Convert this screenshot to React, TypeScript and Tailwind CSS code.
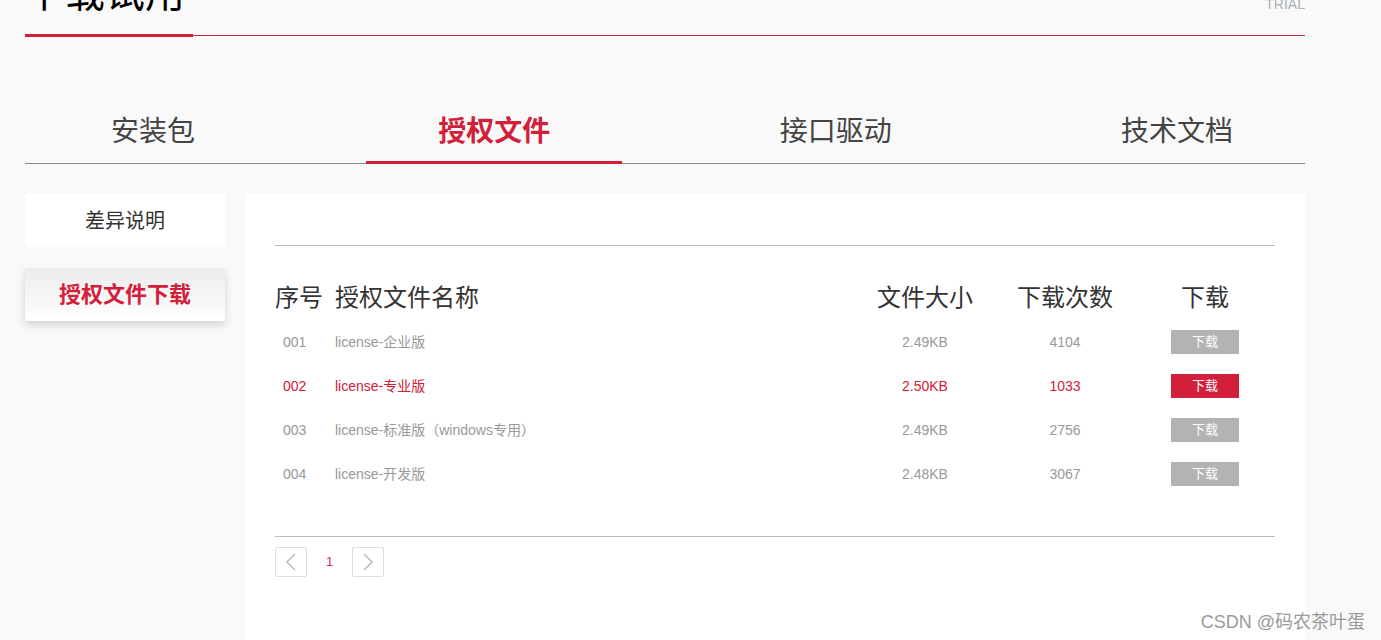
import React from "react"

const TABS = ["安装包", "授权文件", "接口驱动", "技术文档"]

const ROWS = [
  { no: "001", name: "license-企业版", size: "2.49KB", count: "4104" },
  { no: "002", name: "license-专业版", size: "2.50KB", count: "1033", active: true },
  { no: "003", name: "license-标准版（windows专用）", size: "2.49KB", count: "2756" },
  { no: "004", name: "license-开发版", size: "2.48KB", count: "3067" },
]

function Chevron({ dir }: { dir: "left" | "right" }) {
  return (
    <svg width="12" height="20" viewBox="0 0 12 20" fill="none">
      <polyline
        points={dir === "left" ? "10,2 2,10 10,18" : "2,2 10,10 2,18"}
        stroke="#bdbdbd"
        strokeWidth="1.6"
      />
    </svg>
  )
}

export default function App() {
  return (
    <div className="relative min-h-screen overflow-hidden bg-[#f9f9f9] font-['Liberation_Sans','Noto_Sans_CJK_SC',sans-serif]">
      <div className="ml-[25px] w-[1280px]">
        {/* Page header */}
        <div className="flex h-[36px] items-start justify-between border-b border-[#c8283c]">
          <div className="h-[37px] w-[168px] border-b-[3px] border-[#d2203a]">
            <h1 className="-mt-[27px] text-[40px] leading-[40px] text-black">下载试用</h1>
          </div>
          <span className="-mt-[4px] text-[14px] leading-[16px] text-[#aab0b8]">TRIAL</span>
        </div>

        {/* Tabs */}
        <ul className="mt-[63px] flex h-[65px] items-start justify-between border-b border-[#8a8a8a]">
          {TABS.map((t, i) => (
            <li
              key={t}
              className={
                i === 1
                  ? "h-[65px] w-[256px] border-b-[3px] border-[#d2203a] text-center text-[28px] leading-[66px] font-bold text-[#d2203a]"
                  : "h-[64px] w-[256px] text-center text-[28px] leading-[66px] text-[#444]"
              }
            >
              {t}
            </li>
          ))}
        </ul>

        {/* Body */}
        <div className="mt-[30px] flex gap-[20px]">
          <div className="w-[200px] shrink-0">
            <div className="flex h-[53px] items-center justify-center bg-white text-[20px] text-[#333]">
              差异说明
            </div>
            <div className="mt-[21px] flex h-[53px] items-center justify-center bg-gradient-to-b from-[#ececec] to-white text-[22px] font-bold text-[#d2203a] shadow-[0_4px_8px_rgba(0,0,0,0.16)]">
              授权文件下载
            </div>
          </div>

          <div className="h-[460px] flex-1 bg-white px-[30px] pt-[51px]">
            <div className="border-t border-[#bbbbbb]" />

            {/* Table header */}
            <div className="mt-[30px] grid h-[44px] grid-cols-[60px_1fr_140px_140px_140px] items-center text-[24px] text-[#333]">
              <span>序号</span>
              <span>授权文件名称</span>
              <span className="text-center">文件大小</span>
              <span className="text-center">下载次数</span>
              <span className="text-center">下载</span>
            </div>

            {ROWS.map((r) => (
              <div
                key={r.no}
                className={`grid h-[44px] grid-cols-[60px_1fr_140px_140px_140px] items-center text-[14px] ${
                  r.active ? "text-[#d2203a]" : "text-[#999]"
                }`}
              >
                <span className="pl-[8px]">{r.no}</span>
                <span>{r.name}</span>
                <span className="text-center">{r.size}</span>
                <span className="text-center">{r.count}</span>
                <span className="flex justify-center">
                  <button
                    className={`h-[24px] w-[68px] text-[13px] text-white ${
                      r.active ? "bg-[#d2203a]" : "bg-[#b3b3b3]"
                    }`}
                  >
                    下载
                  </button>
                </span>
              </div>
            ))}

            <div className="mt-[40px] border-t border-[#bbbbbb]" />

            {/* Pagination */}
            <div className="mt-[10px] flex items-center">
              <button className="flex h-[30px] w-[32px] items-center justify-center rounded-[2px] border border-[#dddddd] bg-white">
                <Chevron dir="left" />
              </button>
              <span className="w-[45px] text-center text-[13px] text-[#e0206a]">1</span>
              <button className="flex h-[30px] w-[32px] items-center justify-center rounded-[2px] border border-[#dddddd] bg-white">
                <Chevron dir="right" />
              </button>
            </div>
          </div>
        </div>
      </div>

      {/* Watermark */}
      <span className="absolute bottom-[18px] right-[16px] text-[18px] text-[#9a9a9a] [text-shadow:0_0_2px_#fff]">
        CSDN @码农茶叶蛋
      </span>
    </div>
  )
}
